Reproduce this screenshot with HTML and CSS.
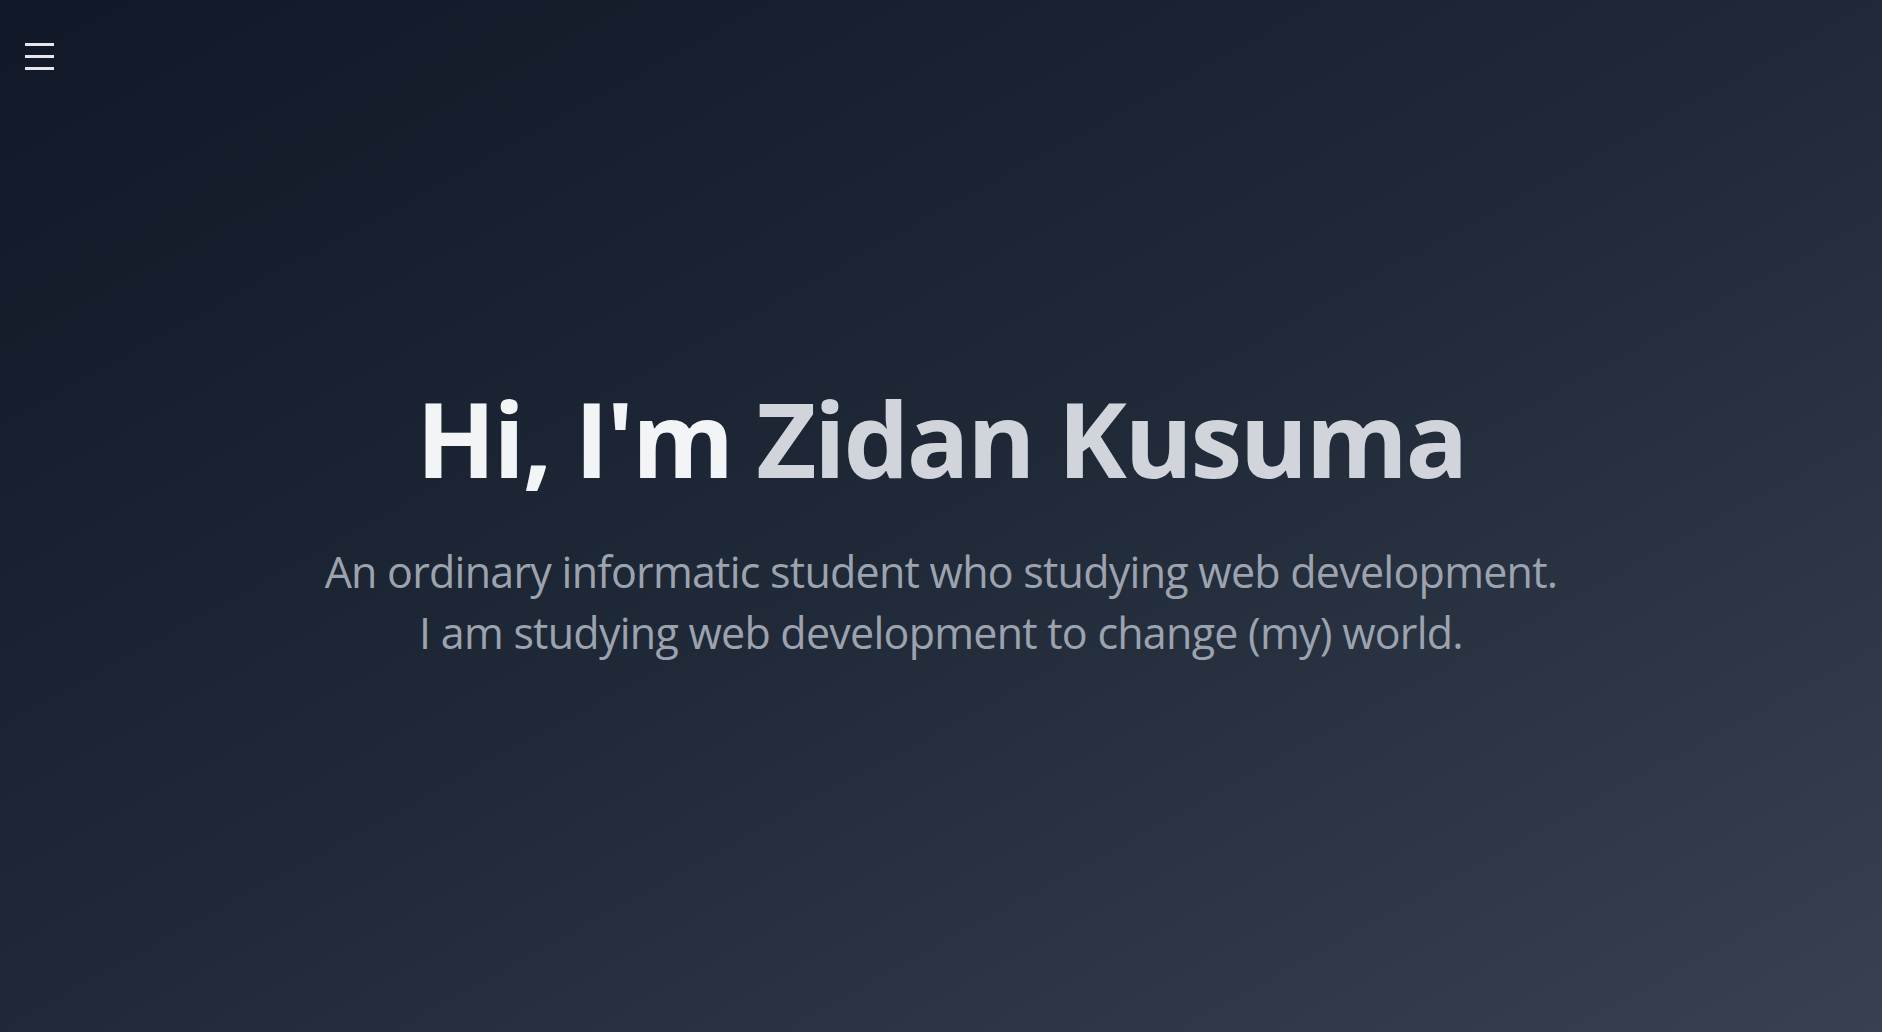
FILE: index.html
```html
<!DOCTYPE html>
<html lang="en">
<head>
<meta charset="utf-8">
<title>Zidan Kusuma</title>
<link rel="stylesheet" href="styles.css">
</head>
<body>
<div class="page">
  <button class="menu-btn" aria-label="Open menu">
    <span class="bar"></span>
    <span class="bar"></span>
    <span class="bar"></span>
  </button>
  <main class="hero">
    <h1 class="title"><span class="title-light">Hi, I'm</span> <span class="title-muted">Zidan Kusuma</span></h1>
    <p class="subtitle">An ordinary informatic student who studying web development.<br>I am studying web development to change (my) world.</p>
  </main>
</div>
</body>
</html>
```

FILE: styles.css
```css
* { box-sizing: border-box; }
html, body { margin: 0; padding: 0; }
body {
  font-family: "Open Sans", "Noto Sans", sans-serif;
  background: #111827;
}
.page {
  position: relative;
  min-height: 100vh;
  background: linear-gradient(to bottom right, #111827 0%, #1f2937 50%, #374151 100%);
}
.menu-btn {
  position: absolute;
  top: 43px;
  left: 25px;
  display: flex;
  flex-direction: column;
  gap: 9px;
  padding: 0;
  border: 0;
  background: transparent;
  cursor: pointer;
}
.bar {
  display: block;
  width: 29px;
  height: 3px;
  background: #e5e7eb;
}
.hero {
  min-height: 100vh;
  display: flex;
  flex-direction: column;
  align-items: center;
  justify-content: center;
  text-align: center;
  padding-top: 16px;
}
.title {
  margin: 0;
  font-size: 104px;
  line-height: 1;
  font-weight: 700;
  letter-spacing: -2.4px;
}
.title-light { color: #f3f4f6; }
.title-muted { color: #d1d5db; }
.subtitle {
  margin: 51px 0 0;
  font-size: 43px;
  line-height: 61px;
  font-weight: 400;
  letter-spacing: -0.75px;
  color: #9ca3af;
}
```
